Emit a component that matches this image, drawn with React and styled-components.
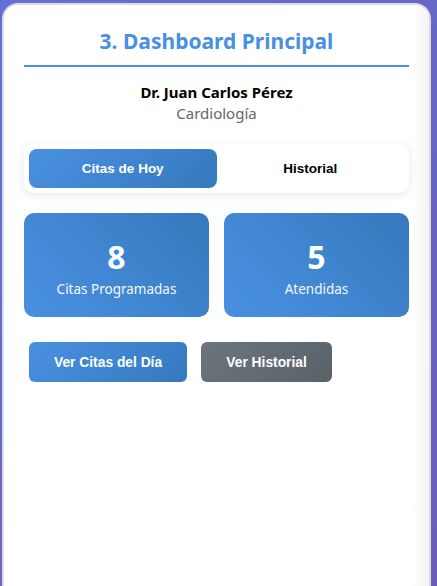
import styled, { createGlobalStyle } from 'styled-components';

const GlobalStyle = createGlobalStyle`
  html, body {
    margin: 0;
    padding: 0;
  }
  body {
    background: linear-gradient(135deg, #6670d4 0%, #6a5cb8 100%);
    font-family: "Noto Sans", "Open Sans", sans-serif;
    min-height: 586px;
    overflow: hidden;
  }
`;

const Page = styled.div`
  padding: 3px 6px 0 2px;
`;

const Card = styled.section`
  min-height: 600px;
  border: 2px solid #dcdcdc;
  border-radius: 16px;
  padding: 20px 20px;
  background: linear-gradient(90deg, #ffffff 96%, #f4f4f4 100%);
  box-sizing: border-box;
`;

const Title = styled.h2`
  margin: 0 0 15px;
  padding: 3px 0 10px;
  border-bottom: 2px solid #4a90e2;
  color: #4a90e2;
  font-size: 21px;
  line-height: 27px;
  font-weight: 700;
  text-align: center;
`;

const Doctor = styled.div`
  text-align: center;
  margin-bottom: 20px;
`;

const DoctorName = styled.div`
  font-size: 15px;
  font-weight: 700;
  color: #000;
  line-height: 21px;
`;

const Specialty = styled.div`
  font-size: 15px;
  color: #666;
  line-height: 21px;
`;

const Tabs = styled.div`
  display: flex;
  padding: 5px;
  background: #fff;
  border-radius: 10px;
  box-shadow: 0 2px 10px rgba(0, 0, 0, 0.1);
  margin-bottom: 20px;
`;

const Tab = styled.button`
  flex: 1;
  height: 39px;
  border: none;
  border-radius: 8px;
  font-family: "Liberation Sans", Arial, sans-serif;
  font-size: 13.5px;
  font-weight: 700;
  cursor: pointer;
  color: ${({ active }) => (active ? '#fff' : '#000')};
  background: ${({ active }) => (active ? 'linear-gradient(135deg, #4a90e2, #357abd)' : 'transparent')};
`;

const Stats = styled.div`
  display: grid;
  grid-template-columns: 1fr 1fr;
  gap: 15px;
  margin-bottom: 20px;
`;

const Stat = styled.div`
  height: 104px;
  box-sizing: border-box;
  padding-top: 6px;
  border-radius: 10px;
  background: linear-gradient(45deg, #4a90e2, #357abd);
  color: #fff;
  display: flex;
  flex-direction: column;
  align-items: center;
  justify-content: center;
`;

const StatNumber = styled.div`
  font-size: 32px;
  font-weight: 700;
  line-height: 40px;
`;

const StatLabel = styled.div`
  font-size: 13.5px;
  line-height: 21px;
  margin-top: 2px;
  opacity: 0.95;
`;

const Actions = styled.div``;

const ActionButton = styled.button`
  display: inline-block;
  margin: 5px;
  height: 40px;
  padding: 0 25px;
  border: none;
  border-radius: 6px;
  font-family: "Liberation Sans", Arial, sans-serif;
  font-size: 13.8px;
  font-weight: 700;
  color: #fff;
  cursor: pointer;
  background: ${({ variant }) =>
    variant === 'secondary'
      ? 'linear-gradient(135deg, #6c757d, #5a6268)'
      : 'linear-gradient(135deg, #4a90e2, #357abd)'};
`;

const App = () => (
  <Page>
    <GlobalStyle />
    <Card>
      <Title>3. Dashboard Principal</Title>
      <Doctor>
        <DoctorName>Dr. Juan Carlos Pérez</DoctorName>
        <Specialty>Cardiología</Specialty>
      </Doctor>
      <Tabs>
        <Tab active>Citas de Hoy</Tab>
        <Tab>Historial</Tab>
      </Tabs>
      <Stats>
        <Stat>
          <StatNumber>8</StatNumber>
          <StatLabel>Citas Programadas</StatLabel>
        </Stat>
        <Stat>
          <StatNumber>5</StatNumber>
          <StatLabel>Atendidas</StatLabel>
        </Stat>
      </Stats>
      <Actions>
        <ActionButton>Ver Citas del Día</ActionButton>{' '}
        <ActionButton variant="secondary">Ver Historial</ActionButton>
      </Actions>
    </Card>
  </Page>
);

export default App;
